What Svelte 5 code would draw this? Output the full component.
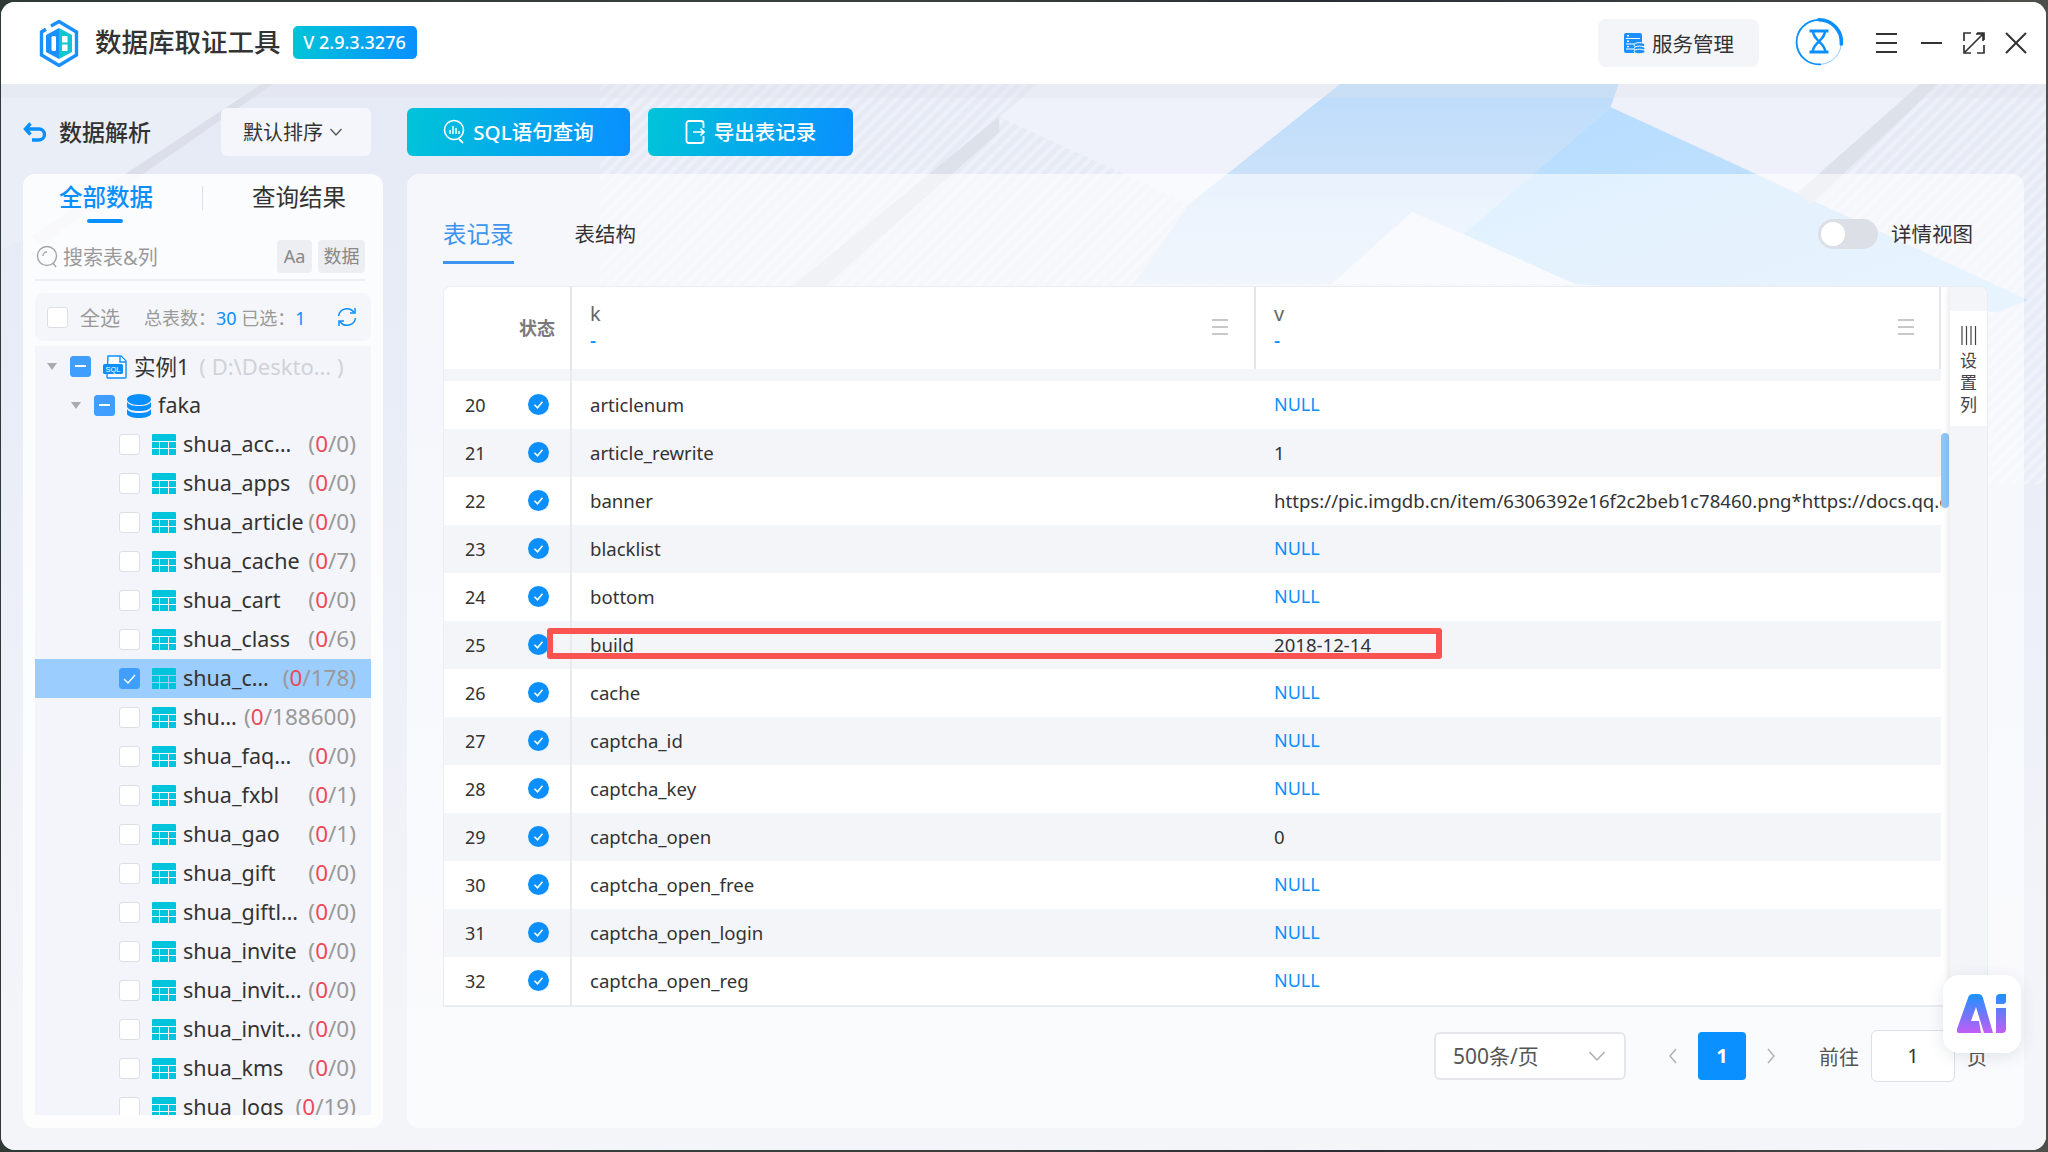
<script>
  const tables = [
    ['shua_acc…', '0', '0'],
    ['shua_apps', '0', '0'],
    ['shua_article', '0', '0'],
    ['shua_cache', '0', '7'],
    ['shua_cart', '0', '0'],
    ['shua_class', '0', '6'],
    ['shua_c…', '0', '178', true],
    ['shu…', '0', '188600'],
    ['shua_faq…', '0', '0'],
    ['shua_fxbl', '0', '1'],
    ['shua_gao', '0', '1'],
    ['shua_gift', '0', '0'],
    ['shua_giftl…', '0', '0'],
    ['shua_invite', '0', '0'],
    ['shua_invit…', '0', '0'],
    ['shua_invit…', '0', '0'],
    ['shua_kms', '0', '0'],
    ['shua_logs', '0', '19']
  ]
  const rows = [
    [20, 'articlenum', 'NULL'],
    [21, 'article_rewrite', '1'],
    [22, 'banner', 'https://pic.imgdb.cn/item/6306392e16f2c2beb1c78460.png*https://docs.qq.com/doc/DRXVUdlBkQm'],
    [23, 'blacklist', 'NULL'],
    [24, 'bottom', 'NULL'],
    [25, 'build', '2018-12-14'],
    [26, 'cache', 'NULL'],
    [27, 'captcha_id', 'NULL'],
    [28, 'captcha_key', 'NULL'],
    [29, 'captcha_open', '0'],
    [30, 'captcha_open_free', 'NULL'],
    [31, 'captcha_open_login', 'NULL'],
    [32, 'captcha_open_reg', 'NULL']
  ]
</script>

<div class="page">
  <div class="window">
    <header class="titlebar">
      <svg class="logo" width="42" height="47" viewBox="0 0 42 47">
        <path d="M13 6 21 1.500 38.500 12V35L21 45.500 3.500 35V12L8 9.300" fill="none" stroke="#1a90ff" stroke-width="3.400"/>
        <path d="M21 8 8 15V32L21 39Z" fill="#1a90ff"/>
        <path d="M21 8 34 15V32L21 39Z" fill="#10c5d6"/>
        <rect x="13.500" y="16" width="4.500" height="15" rx="1.500" fill="#fff"/>
        <path d="M24 16h5.500v6.500H24zM24 24.500h5.500V31H24z" fill="#fff"/>
      </svg>
      <h1 class="apptitle">数据库取证工具</h1>
      <span class="version">V 2.9.3.3276</span>
      <div class="spacer"></div>
      <button class="service">
        <svg width="22" height="22" viewBox="0 0 22 22">
          <rect x="1" y="1" width="18" height="20" rx="2" fill="#1a90ff"/>
          <path d="M3 6.500h14M3 12h14M3 17h8" stroke="#fff" stroke-width="1.200"/>
          <path d="M4 3.800h2M4 9.300h2M4 14.600h2" stroke="#fff" stroke-width="1.400"/>
          <ellipse cx="16.500" cy="13" rx="5.500" ry="2.400" fill="#1a90ff" stroke="#fff"/>
          <ellipse cx="16.500" cy="16.500" rx="5.500" ry="2.400" fill="#1a90ff" stroke="#fff"/>
          <ellipse cx="16.500" cy="19.500" rx="5.500" ry="2.300" fill="#1a90ff" stroke="#fff"/>
        </svg>
        服务管理
      </button>
      <svg class="avatar" width="48" height="48" viewBox="0 0 48 48">
        <path d="M46.300 26A22.300 22.300 0 0 1 26 46.300" fill="none" stroke="#8cc8ff" stroke-width="1"/>
        <path d="M26 46.300A22.300 22.300 0 1 1 24 1.800" fill="none" stroke="#0a8fff" stroke-width="1.800"/>
        <path d="M24 1.800A22.300 22.300 0 0 1 46.300 26" fill="none" stroke="#0a8fff" stroke-width="3.600" stroke-linecap="round"/>
        <path d="M14.500 13h19M14.500 34h19" stroke="#0a8fff" stroke-width="3"/>
        <path d="M18 13c0 4.500 2.500 7 6 10.500 3.500-3.500 6-6 6-10.500M17.500 34c.5-4 3-7.500 6.500-10.500 3.500 3 6 6.500 6.500 10.500" fill="none" stroke="#0a8fff" stroke-width="2.400"/>
      </svg>
      <div class="winctl">
        <svg class="burger" width="22" height="22" viewBox="0 0 22 22"><path d="M0 2h21M0 11h21M0 20h21" stroke="#333" stroke-width="2"/></svg>
        <svg width="22" height="22" viewBox="0 0 22 22"><path d="M0 11h21" stroke="#333" stroke-width="2"/></svg>
        <svg width="22" height="22" viewBox="0 0 22 22"><path d="M1 9V1h7M14 1h7v7M21 13v8h-7M8 21H1v-8M2 20 20 2M13 2h7v7" fill="none" stroke="#333" stroke-width="1.700"/></svg>
        <svg width="22" height="22" viewBox="0 0 22 22"><path d="M1 1 21 21M21 1 1 21" stroke="#333" stroke-width="2"/></svg>
      </div>
    </header>

    <main class="main">
      <svg class="wallpaper" viewBox="0 84 2048 1066" preserveAspectRatio="none">
        <defs>
          <linearGradient id="base" x1="0" y1="0" x2="0" y2="1">
            <stop offset="0" stop-color="#e6eaf5"/>
            <stop offset="0.3" stop-color="#e9edf7"/>
            <stop offset="0.9" stop-color="#f4f5f9"/>
          </linearGradient>
          <linearGradient id="bandA" x1="0" y1="0" x2="0" y2="1">
            <stop offset="0" stop-color="#bcdcfb"/>
            <stop offset="1" stop-color="#dde8f8"/>
          </linearGradient>
          <linearGradient id="bandB" x1="0" y1="0" x2="1" y2="1">
            <stop offset="0" stop-color="#b5dcff"/>
            <stop offset="1" stop-color="#c9e4fb"/>
          </linearGradient>
          <pattern id="stripes" width="9" height="9" patternUnits="userSpaceOnUse" patternTransform="rotate(45)">
            <rect width="4" height="9" fill="#ffffff" opacity="0.28"/>
          </pattern>
        </defs>
        <rect x="0" y="84" width="2048" height="1066" fill="url(#base)"/>
        <rect x="600" y="84" width="1448" height="400" fill="url(#stripes)"/>
        <polygon points="1040,84 1345,84 1190,204 1000,117" fill="#eff2fb"/>
        <polygon points="1341,84 1624,84 1612,107 1465,234 1413,212 1333,284 1134,284 1190,204" fill="url(#bandA)"/>
        <polygon points="1612,107 2030,300 2000,312 1576,284 1465,234" fill="url(#bandB)"/>
        <polygon points="1413,212 1576,284 1333,284" fill="#f1f3fa"/>
        <polygon points="1620,84 1922,84 1800,192 1612,107" fill="#eef1fa"/>
        <polygon points="1922,84 1940,84 1812,205 1800,192" fill="#dde1ea"/>
        <polygon points="999,117 1000,132 810,300 795,284" fill="#dde1ea"/>
        <polygon points="261,84 272,84 40,245 30,236" fill="#dcdfe9"/>
        <polygon points="0,84 261,84 30,236 0,250" fill="#edf0f8" opacity="0.6"/>
        <rect x="0" y="84" width="2048" height="14" fill="#dfe2eb" opacity="0.35"/>
      </svg>

      <div class="toolbar-left">
        <svg class="back" width="24" height="24" viewBox="0 0 24 24">
          <path d="M7.500 3.500 2.500 9l5 5.500" fill="none" stroke="#0a8fff" stroke-width="3.400"/>
          <path d="M3 9h13a5.500 5.500 0 0 1 0 11H9" fill="none" stroke="#0a8fff" stroke-width="3.400"/>
        </svg>
        <span class="crumb">数据解析</span>
        <button class="sortbtn">
          <span class="lift">默认排序</span>
          <svg width="14" height="14" viewBox="0 0 14 14"><path d="M1.500 4 7 10l5.500-6" fill="none" stroke="#555" stroke-width="1.300"/></svg>
        </button>
      </div>

      <div class="toolbar-right">
        <button class="gradbtn">
          <svg width="22" height="26" viewBox="0 0 22 26">
            <circle cx="11" cy="11" r="9.500" fill="none" stroke="#fff" stroke-width="1.600"/>
            <path d="M7 11v4M10 7v8M13 9v6M16 12v3" stroke="#fff" stroke-width="1.500"/>
            <path d="M16 20l4 4" stroke="#fff" stroke-width="1.800"/>
          </svg>
          <span class="lift">SQL语句查询</span>
        </button>
        <button class="gradbtn export">
          <svg width="20" height="24" viewBox="0 0 20 24">
            <path d="M18.500 8V3.500A2.500 2.500 0 0 0 16 1H4a2.500 2.500 0 0 0-2.500 2.500v17A2.500 2.500 0 0 0 4 23h12a2.500 2.500 0 0 0 2.500-2.500V16" fill="none" stroke="#fff" stroke-width="1.800"/>
            <path d="M8 12h11M15.500 8.500 19 12l-3.500 3.500" fill="none" stroke="#fff" stroke-width="1.600"/>
          </svg>
          <span class="lift">导出表记录</span>
        </button>
      </div>

      <aside class="sidebar">
        <div class="side-tabs">
          <div class="side-tab active">全部数据<i></i></div>
          <span class="tab-div"></span>
          <div class="side-tab">查询结果</div>
        </div>
        <div class="search">
          <svg width="22" height="24" viewBox="0 0 22 24">
            <circle cx="11" cy="11" r="9.500" fill="none" stroke="#a6a6a6" stroke-width="1.400"/>
            <path d="M7 11a4 4 0 0 1 4-4M17 18l3 4" fill="none" stroke="#a6a6a6" stroke-width="1.400"/>
          </svg>
          <span class="placeholder">搜索表&amp;列</span>
          <span class="chip aa">Aa</span>
          <span class="chip">数据</span>
        </div>
        <div class="selectbar">
          <span class="cb"></span>
          <span class="all">全选</span>
          <span class="stat">总表数：<b>30</b> 已选：<b>1</b></span>
          <svg class="refresh" width="20" height="20" viewBox="0 0 20 20">
            <path d="M1.500 9A8.500 8.500 0 0 1 17 5.500M18.500 11A8.500 8.500 0 0 1 3 14.500" fill="none" stroke="#0a8fff" stroke-width="1.500"/>
            <path d="M18 1v5h-5M2 19v-5h5" fill="none" stroke="#0a8fff" stroke-width="1.500"/>
          </svg>
        </div>
        <div class="tree">
          <div class="node l1">
            <span class="arrow"></span>
            <span class="cb mixed"></span>
            <svg width="24" height="24" viewBox="0 0 24 24">
              <path d="M5 1h13l5 5v16a1 1 0 0 1-1 1H5a1 1 0 0 1-1-1z" fill="#fff" stroke="#0a8fff" stroke-width="1.400"/>
              <path d="M17 1v6h6" fill="#fff" stroke="#0a8fff" stroke-width="1.400"/>
              <rect x="0" y="9" width="20" height="10" rx="1.500" fill="#0a8fff"/>
              <text x="10" y="17" font-size="7.500" fill="#fff" text-anchor="middle" font-family="Liberation Sans, sans-serif">SQL</text>
            </svg>
            <span class="name top">实例1</span>
            <span class="path">( D:\Deskto… )</span>
          </div>
          <div class="node l2">
            <span class="arrow"></span>
            <span class="cb mixed"></span>
            <svg width="24" height="24" viewBox="0 0 24 24">
              <ellipse cx="12" cy="5.500" rx="12" ry="5.500" fill="#0a8fff"/>
              <path d="M0 8c2 3 6 4 12 4s10-1 12-4v5c-2 3-6 4-12 4S2 16 0 13z" fill="#0a8fff"/>
              <path d="M0 15c2 3 6 4 12 4s10-1 12-4v5c-1 2.500-6 4-12 4S1 22.500 0 20z" fill="#0a8fff"/>
            </svg>
            <span class="name">faka</span>
          </div>
          {#each tables as t}
            <div class="node l3" class:selected={t[3]}>
              <span class="cb" class:checked={t[3]}>
                {#if t[3]}
                  <svg width="21" height="21" viewBox="0 0 21 21"><path d="M5 11l4 4 7-8" fill="none" stroke="#fff" stroke-width="1.200"/></svg>
                {/if}
              </span>
              <svg width="24" height="21" viewBox="0 0 24 21">
                <path d="M0 1a1 1 0 0 1 1-1h22a1 1 0 0 1 1 1v6H0z" fill="#00c4dc"/>
                <path d="M0 8h7v6H0zM8 8h8v6H8zM17 8h7v6h-7zM0 15h7v6H0zM8 15h8v6H8zM17 15h7v6h-7z" fill="#00c4dc"/>
              </svg>
              <span class="name">{t[0]}</span>
              <span class="count">(<em>{t[1]}</em>/{t[2]})</span>
            </div>
          {/each}
        </div>
      </aside>

      <section class="content">
        <div class="tabsrow">
          <div class="rtab active">表记录</div>
          <div class="rtab">表结构</div>
          <div class="spacer"></div>
          <span class="switch"><i></i></span>
          <span class="switch-label">详情视图</span>
        </div>

        <div class="tablecard">
          <div class="tmain">
            <div class="thead">
              <div class="th-state">状态</div>
              <div class="th"><span class="k">k</span><span class="dash">-</span>
                <svg class="colmenu" width="16" height="18" viewBox="0 0 16 18"><path d="M0 2h16M0 9h16M0 16h16" stroke="#c8c8c8" stroke-width="2"/></svg>
              </div>
              <div class="th last"><span class="k">v</span><span class="dash">-</span>
                <svg class="colmenu" width="16" height="18" viewBox="0 0 16 18"><path d="M0 2h16M0 9h16M0 16h16" stroke="#c8c8c8" stroke-width="2"/></svg>
              </div>
            </div>
            <div class="gap"><i></i></div>
            {#each rows as r, i}
              <div class="row" class:odd={i % 2 === 1}>
                <span class="num">{r[0]}</span>
                <span class="state">
                  <svg width="21" height="21" viewBox="0 0 21 21">
                    <circle cx="10.500" cy="10.500" r="10.500" fill="#0a8fff"/>
                    <path d="M6.500 10.800l3 3 5-6" fill="none" stroke="#fff" stroke-width="1.600"/>
                  </svg>
                </span>
                <span class="cell key">{r[1]}</span>
                <span class="cell val" class:null={r[2] === 'NULL'}>{r[2]}</span>
              </div>
            {/each}
            <div class="highlight"></div>
          </div>
          <div class="scrolltrack"><i></i></div>
          <div class="settings">
            <div class="setbtn">
              <svg width="16" height="19" viewBox="0 0 16 19"><path d="M1 0v19M5.500 0v19M10 0v19M14.500 0v19" stroke="#444" stroke-width="1.200"/></svg>
              <span>设</span><span>置</span><span>列</span>
            </div>
          </div>
        </div>

        <div class="pager">
          <div class="pagesize"><span class="lift">500条/页</span>
            <svg width="18" height="12" viewBox="0 0 18 12"><path d="M1.500 2 9 10l7.500-8" fill="none" stroke="#aaa" stroke-width="1.400"/></svg>
          </div>
          <svg class="prev" width="10" height="16" viewBox="0 0 10 16"><path d="M8 1 2 8l6 7" fill="none" stroke="#b0b0b0" stroke-width="1.500"/></svg>
          <span class="current">1</span>
          <svg class="next" width="10" height="16" viewBox="0 0 10 16"><path d="M2 1l6 7-6 7" fill="none" stroke="#b0b0b0" stroke-width="1.500"/></svg>
          <span class="goto">前往</span>
          <span class="jump">1</span>
          <span class="pageword">页</span>
        </div>
      </section>

      <div class="aibtn">
        <svg width="50" height="40" viewBox="0 0 50 40">
          <defs>
            <linearGradient id="ai" x1="0" y1="0" x2="0" y2="1">
              <stop offset="0" stop-color="#1a93ff"/>
              <stop offset="1" stop-color="#c25cf5"/>
            </linearGradient>
          </defs>
          <path d="M11 4Q12 0 16 0H21Q25 0 26 4L36 39H27L19 13 14 27H22L24 39H2Q-1 39 0 35Z" fill="url(#ai)"/>
          <path d="M39 4Q39 0 43 0H49V7Q49 10 46 10H39ZM39 14H49V35Q49 39 45 39H39Z" fill="url(#ai)"/>
        </svg>
      </div>
    </main>
  </div>
</div>

<style>
  :global(body) {
    margin: 0;
    background: #2c3136;
  }
  button {
    font-family: inherit;
    border: 0;
  }
  i, em {
    font-style: normal;
  }
  .page {
    width: 2048px;
    height: 1152px;
    padding: 2px 2px 2px 1px;
    box-sizing: border-box;
    background: linear-gradient(90deg, #2f3a36, #3a3f3c 45%, #2a2d33 65%, #4c4f4a);
    font-family: "Noto Sans", "Noto Sans CJK SC", sans-serif;
    color: #333;
    overflow: hidden;
  }
  .window {
    height: 100%;
    display: flex;
    flex-direction: column;
    border-radius: 14px;
    overflow: hidden;
    background: #f4f5f9;
  }
  .spacer {
    flex: 1;
  }
  .lift {
    margin-bottom: 2px;
  }

  /* title bar */
  .titlebar {
    height: 82px;
    flex: none;
    display: flex;
    align-items: center;
    padding-left: 37px;
    background: #fff;
    position: relative;
    z-index: 2;
  }
  .apptitle {
    margin: 0 0 5px 15px;
    font-size: 26.500px;
    font-weight: 500;
    color: #333;
  }
  .version {
    margin: 0 0 2px 12px;
    width: 124px;
    height: 33px;
    line-height: 33px;
    text-align: center;
    border-radius: 5px;
    color: #fff;
    font-size: 18px;
    font-weight: 500;
    background: linear-gradient(90deg, #00c4d8, #0a8fff);
  }
  .service {
    width: 161px;
    height: 48px;
    display: flex;
    align-items: center;
    justify-content: center;
    gap: 7px;
    border-radius: 8px;
    background: #f4f5f8;
    color: #333;
    font-size: 20.500px;
  }
  .avatar {
    margin: 0 0 2px 36px;
  }
  .winctl {
    display: flex;
    gap: 20px;
    margin-left: 33px;
    margin-right: 19px;
  }
  .burger {
    margin-right: 3px;
  }

  /* main area */
  .main {
    flex: 1;
    position: relative;
    display: grid;
    grid-template-columns: 360px 1617px;
    grid-template-rows: 48px 1fr;
    column-gap: 24px;
    row-gap: 18px;
    padding: 24px 22px 22px;
    min-height: 0;
  }
  .wallpaper {
    position: absolute;
    left: 0;
    top: 0;
    width: 100%;
    height: 100%;
  }
  .toolbar-left, .toolbar-right, .sidebar, .content {
    position: relative;
  }
  .toolbar-left {
    display: flex;
    align-items: center;
  }
  .crumb {
    margin: 0 0 2px 12px;
    font-size: 23px;
    font-weight: 500;
    color: #333;
  }
  .sortbtn {
    margin-left: 70px;
    width: 150px;
    height: 48px;
    display: flex;
    align-items: center;
    gap: 6px;
    padding: 0 0 0 22px;
    background: #f4f6fb;
    border-radius: 6px;
    font-size: 20px;
    color: #333;
  }
  .toolbar-right {
    display: flex;
    gap: 18px;
  }
  .gradbtn {
    width: 223px;
    height: 48px;
    display: flex;
    align-items: center;
    justify-content: center;
    gap: 8px;
    border-radius: 6px;
    color: #fff;
    font-size: 20.500px;
    font-weight: 500;
    background: linear-gradient(100deg, #00c4d8, #0a8fff);
  }
  .gradbtn.export {
    width: 205px;
    gap: 9px;
  }

  /* sidebar */
  .sidebar {
    display: flex;
    flex-direction: column;
    padding: 0 12px 13px;
    background: rgba(255, 255, 255, 0.82);
    border-radius: 12px;
    min-height: 0;
  }
  .side-tabs {
    height: 48px;
    display: flex;
    align-items: flex-start;
    padding-top: 4px;
    box-sizing: border-box;
    padding-left: 24px;
  }
  .side-tab {
    position: relative;
    font-size: 23.500px;
    line-height: 38px;
    color: #333;
  }
  .side-tab.active {
    color: #0a8fff;
    font-weight: 500;
  }
  .side-tab i {
    position: absolute;
    left: 28px;
    width: 36px;
    top: 41px;
    height: 4px;
    border-radius: 2px;
    background: #0a8fff;
  }
  .tab-div {
    width: 1px;
    height: 24px;
    margin: 8px 49px 0 49px;
    background: #dde0e6;
  }
  .search {
    margin-top: 19px;
    height: 40px;
    box-sizing: border-box;
    padding: 0 0 7px 1px;
    display: flex;
    align-items: center;
    border-bottom: 2px solid #eceef3;
    width: 330px;
  }
  .placeholder {
    margin-left: 5px;
    flex: 1;
    font-size: 20px;
    color: #9a9a9a;
  }
  .chip {
    width: 47px;
    height: 33px;
    line-height: 33px;
    text-align: center;
    border-radius: 4px;
    background: #eceef2;
    font-size: 18px;
    color: #888;
  }
  .chip.aa {
    width: 35px;
    margin-right: 6px;
  }
  .selectbar {
    margin-top: 12px;
    height: 48px;
    flex: none;
    display: flex;
    align-items: center;
    padding-left: 12px;
    background: #f5f6fa;
    border-radius: 8px;
    position: relative;
  }
  .cb {
    width: 21px;
    height: 21px;
    flex: none;
    box-sizing: border-box;
    border: 1px solid #dcdfe6;
    border-radius: 3px;
    background: #fff;
    position: relative;
    display: block;
  }
  .cb.mixed, .cb.checked {
    background: #409eff;
    border-color: #409eff;
  }
  .cb.checked svg {
    position: absolute;
    left: -1px;
    top: -1px;
  }
  .cb.mixed::after {
    content: "";
    position: absolute;
    left: 4px;
    top: 8px;
    width: 11px;
    height: 2px;
    background: #fff;
  }
  .all {
    margin-left: 12px;
    font-size: 20px;
    color: #999;
  }
  .stat {
    margin-left: 24px;
    font-size: 18px;
    color: #999;
  }
  .stat b {
    font-weight: 400;
    color: #0a8fff;
  }
  .refresh {
    margin-left: auto;
    margin-right: 14px;
  }
  .tree {
    margin-top: 5px;
    flex: 1;
    min-height: 0;
    overflow: hidden;
    background: #f4f5fa;
  }
  .node {
    height: 39px;
    display: flex;
    align-items: center;
    font-size: 21.500px;
    color: #333;
    white-space: nowrap;
  }
  .node:first-child {
    margin-top: 1px;
  }
  .l1 {
    padding-left: 12px;
  }
  .l2 {
    padding-left: 36px;
  }
  .l1 .cb, .l2 .cb {
    margin: 0 12px 0 13px;
  }
  .l3 {
    padding: 0 15px 0 84px;
  }
  .l3 svg:not(.cb svg) {
    margin-left: 12px;
    flex: none;
  }
  .arrow {
    width: 0;
    height: 0;
    flex: none;
    border-left: 5.500px solid transparent;
    border-right: 5.500px solid transparent;
    border-top: 7px solid #a8abb2;
  }
  .name {
    margin: 0 0 2px 7px;
    flex: 1;
  }
  .name.top {
    flex: none;
    margin-left: 7px;
  }
  .path {
    margin: 0 0 2px 10px;
    font-size: 22px;
    color: #d0d2d8;
  }
  .count {
    margin-bottom: 2px;
    font-size: 22.500px;
    color: #999;
  }
  .count em {
    color: #ea4a57;
  }
  .selected {
    background: #9bcdff;
  }

  /* content */
  .content {
    display: flex;
    flex-direction: column;
    padding: 0 36px;
    background: rgba(255, 255, 255, 0.58);
    border-radius: 12px;
    min-height: 0;
  }
  .tabsrow {
    height: 112px;
    flex: none;
    box-sizing: border-box;
    padding-top: 40px;
    display: flex;
    align-items: flex-start;
  }
  .rtab {
    height: 50px;
    box-sizing: border-box;
    line-height: 40px;
    font-size: 23.500px;
    color: #333;
    margin-right: 61px;
  }
  .rtab + .rtab {
    font-size: 20.500px;
  }
  .rtab.active {
    color: #3d93f0;
    border-bottom: 3px solid #3d93f0;
  }
  .switch {
    margin-top: 5px;
    width: 60px;
    height: 30px;
    border-radius: 15px;
    background: #dcdfe6;
    position: relative;
  }
  .switch i {
    position: absolute;
    left: 3px;
    top: 3px;
    width: 24px;
    height: 24px;
    border-radius: 50%;
    background: #fff;
  }
  .switch-label {
    margin-left: 13px;
    margin-right: 15px;
    line-height: 40px;
    font-size: 20.500px;
  }
  .tablecard {
    height: 721px;
    flex: none;
    box-sizing: border-box;
    display: flex;
    border: 1px solid #e9ecf2;
    border-bottom-width: 2px;
    border-radius: 8px 8px 0 0;
    overflow: hidden;
    background: #fff;
    width: 1545px;
  }
  .tmain {
    width: 1497px;
    flex: none;
    position: relative;
  }
  .thead {
    height: 82px;
    display: flex;
    background: #fff;
  }
  .th-state {
    width: 128px;
    box-sizing: border-box;
    border-right: 2px solid #e4e6eb;
    text-align: right;
    padding-right: 15px;
    line-height: 82px;
    font-size: 18px;
    font-weight: 700;
    color: #7a7a7a;
  }
  .th {
    position: relative;
    width: 684px;
    box-sizing: border-box;
    border-right: 2px solid #e4e6eb;
    padding: 12px 0 0 18px;
    display: flex;
    flex-direction: column;
  }
  .th.last {
    width: 685px;
  }
  .k {
    font-size: 20px;
    line-height: 30px;
    color: #666;
  }
  .dash {
    font-size: 19px;
    font-weight: 500;
    line-height: 22px;
    color: #0a8fff;
  }
  .colmenu {
    position: absolute;
    right: 26px;
    top: 31px;
  }
  .th.last .colmenu {
    right: 25px;
  }
  .gap {
    height: 12px;
    background: #f3f5f9;
  }
  .gap i {
    display: block;
    width: 128px;
    height: 12px;
    box-sizing: border-box;
    border-right: 2px solid #e8eaee;
  }
  .row {
    height: 48px;
    display: flex;
    align-items: center;
    font-size: 18.600px;
    color: #333;
    white-space: nowrap;
  }
  .row.odd {
    background: #f3f5f9;
  }
  .num {
    width: 40px;
    box-sizing: border-box;
    padding-left: 21px;
    flex: none;
    font-size: 18px;
  }
  .state {
    width: 88px;
    height: 48px;
    box-sizing: border-box;
    flex: none;
    border-right: 2px solid #e8eaee;
    display: flex;
    align-items: center;
    padding-left: 44px;
  }
  .state svg {
    display: block;
    margin-bottom: 1px;
  }
  .cell {
    overflow: hidden;
    margin-bottom: 2px;
  }
  .key {
    width: 685px;
    flex: none;
    padding-left: 18px;
    box-sizing: border-box;
  }
  .val {
    flex: 1;
    min-width: 0;
    box-sizing: border-box;
    padding-left: 17px;
  }
  .null {
    font-size: 18px;
    color: #0a8fff;
  }
  .highlight {
    position: absolute;
    left: 103px;
    top: 341px;
    width: 895px;
    height: 31px;
    box-sizing: border-box;
    border: 6px solid #fb5252;
    border-radius: 3px;
  }
  .scrolltrack {
    width: 9px;
    flex: none;
    position: relative;
    background: #fff;
  }
  .scrolltrack i {
    position: absolute;
    left: 0;
    top: 146px;
    width: 8px;
    height: 75px;
    border-radius: 4px;
    background: #90c6f5;
  }
  .settings {
    flex: 1;
    background: #f3f5f9;
    box-shadow: -3px 0 4px rgba(0, 0, 0, 0.07);
    padding-top: 24px;
    position: relative;
  }
  .setbtn {
    height: 115px;
    background: #fff;
    display: flex;
    flex-direction: column;
    align-items: center;
    font-size: 17px;
    line-height: 22px;
    padding-top: 15px;
    box-sizing: border-box;
    color: #444;
  }
  .setbtn svg {
    margin-bottom: 5px;
  }

  /* pager */
  .pager {
    margin-top: 25px;
    display: flex;
    align-items: center;
    height: 48px;
    font-size: 20px;
    color: #555;
    padding-left: 991px;
  }
  .pagesize {
    width: 192px;
    height: 48px;
    box-sizing: border-box;
    display: flex;
    align-items: center;
    justify-content: space-between;
    padding: 0 18px 0 17px;
    background: #fff;
    border: 2px solid #e4e6ec;
    border-radius: 6px;
    font-size: 21px;
  }
  .prev {
    margin-left: 42px;
  }
  .current {
    margin-left: 20px;
    width: 48px;
    height: 48px;
    line-height: 48px;
    text-align: center;
    border-radius: 4px;
    background: #0a90ff;
    color: #fff;
    font-weight: 700;
  }
  .next {
    margin-left: 20px;
  }
  .goto {
    margin-left: 43px;
  }
  .jump {
    margin-left: 12px;
    width: 84px;
    height: 52px;
    line-height: 50px;
    box-sizing: border-box;
    text-align: center;
    background: #fff;
    border: 1px solid #dcdfe6;
    border-radius: 6px;
    color: #333;
  }
  .pageword {
    margin-left: 12px;
  }
  .aibtn {
    position: absolute;
    left: 1942px;
    top: 891px;
    width: 78px;
    height: 78px;
    display: flex;
    align-items: center;
    justify-content: center;
    background: #fff;
    border-radius: 16px;
    box-shadow: 0 4px 16px rgba(40, 60, 100, 0.12);
  }
</style>
